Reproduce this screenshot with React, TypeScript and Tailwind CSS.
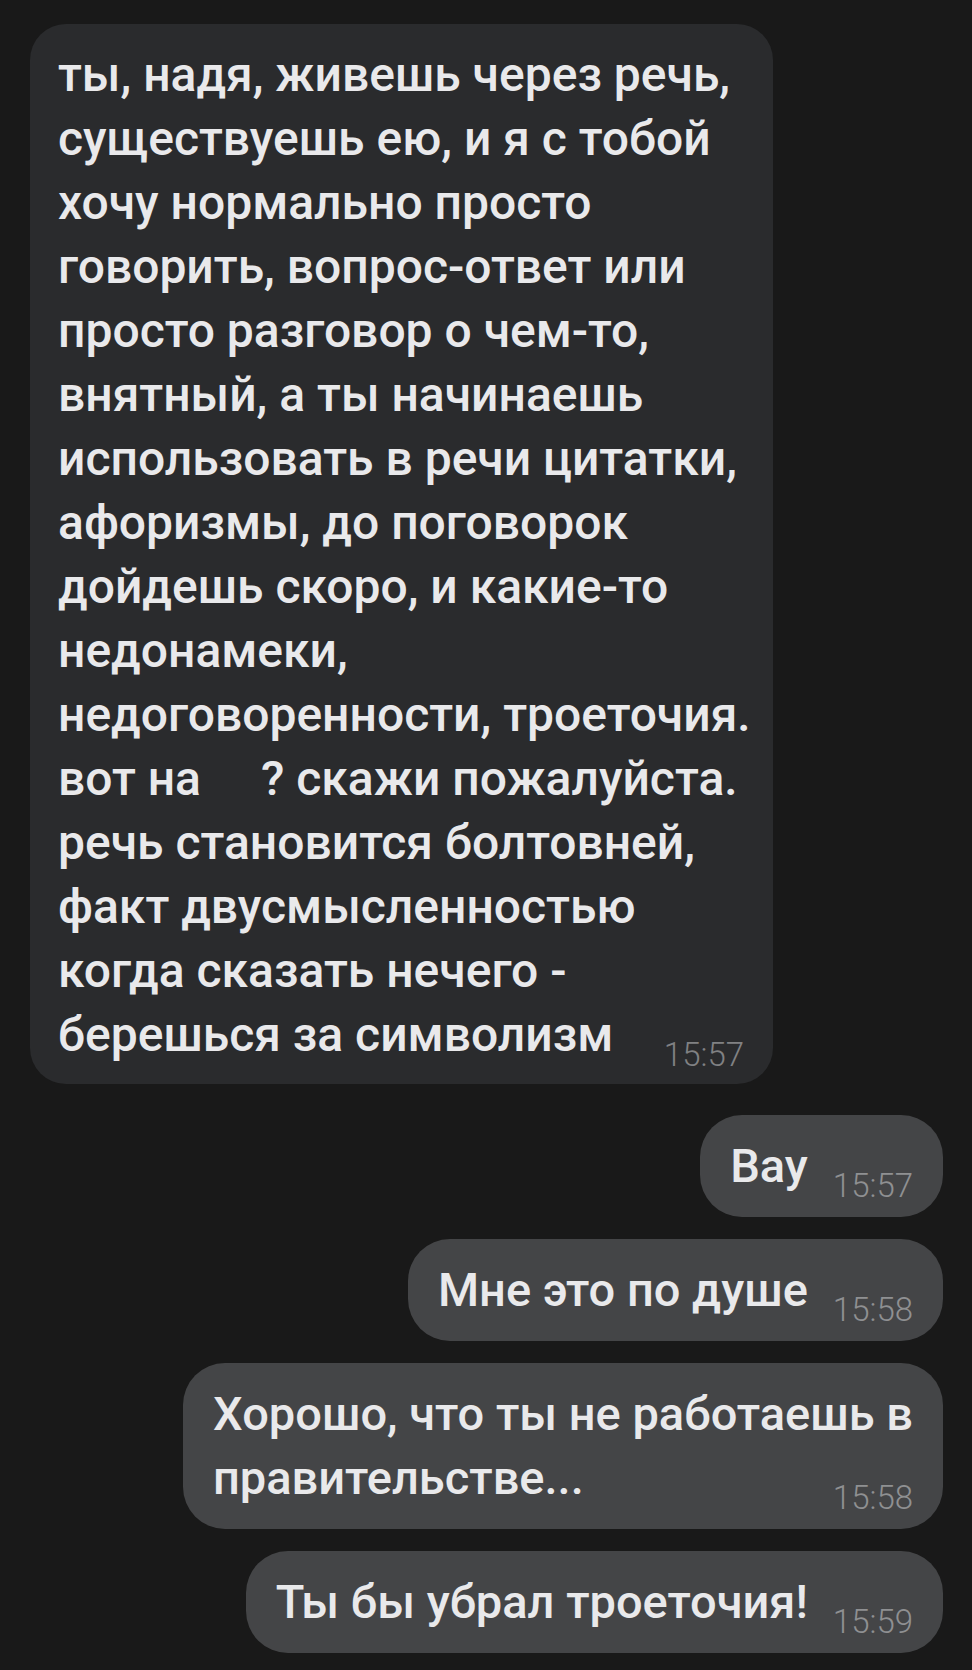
const incoming = [
  'ты, надя, живешь через речь,',
  'существуешь ею, и я с тобой',
  'хочу нормально просто',
  'говорить, вопрос-ответ или',
  'просто разговор о чем-то,',
  'внятный, а ты начинаешь',
  'использовать в речи цитатки,',
  'афоризмы, до поговорок',
  'дойдешь скоро, и какие-то',
  'недонамеки,',
  'недоговоренности, троеточия.',
  'GAP',
  'речь становится болтовней,',
  'факт двусмысленностью',
  'когда сказать нечего -',
];

interface Message {
  lines: string[];
  time: string;
}

const outgoing: Message[] = [
  { lines: ['Вау'], time: '15:57' },
  { lines: ['Мне это по душе'], time: '15:58' },
  { lines: ['Хорошо, что ты не работаешь в', 'правительстве...'], time: '15:58' },
  { lines: ['Ты бы убрал троеточия!'], time: '15:59' },
];

function Outgoing({ msg }: { msg: Message }) {
  const last = msg.lines[msg.lines.length - 1];
  return (
    <div className="rounded-[42px] bg-[#444547] pl-[30px] pr-[30px] pt-[19px] pb-[19px] text-[47px]">
      {msg.lines.slice(0, -1).map((line) => (
        <div key={line} className="whitespace-nowrap">
          {line}
        </div>
      ))}
      <div className="flex items-end justify-between gap-[25px]">
        <span className="whitespace-nowrap">{last}</span>
        <span className="text-[33px] leading-[25px] font-light text-[#8f9092]">{msg.time}</span>
      </div>
    </div>
  );
}

export default function App() {
  return (
    <div className="min-h-screen bg-[#191919] pt-[24px] pl-[30px] pr-[29px] font-[Roboto,'Noto_Sans',sans-serif] font-medium text-[48px] leading-[64px] text-[#e9e9eb]">
      <div className="w-[743px] rounded-[36px] bg-[#2a2b2d] pl-[28px] pr-[29px] pt-[19px] pb-[17px]">
        {incoming.map((line, i) =>
          line === 'GAP' ? (
            <div key={i} className="flex whitespace-nowrap">
              <span>вот на</span>
              <span className="inline-block w-[60px]" />
              <span>? скажи пожалуйста.</span>
            </div>
          ) : (
            <div key={i} className="whitespace-nowrap">
              {line}
            </div>
          )
        )}
        <div className="flex items-end justify-between">
          <span className="whitespace-nowrap">берешься за символизм</span>
          <span className="text-[33px] leading-[25px] font-light text-[#808183]">15:57</span>
        </div>
      </div>

      <div className="mt-[31px] flex flex-col items-end gap-[22px]">
        {outgoing.map((msg) => (
          <Outgoing key={msg.lines[0]} msg={msg} />
        ))}
      </div>
    </div>
  );
}
